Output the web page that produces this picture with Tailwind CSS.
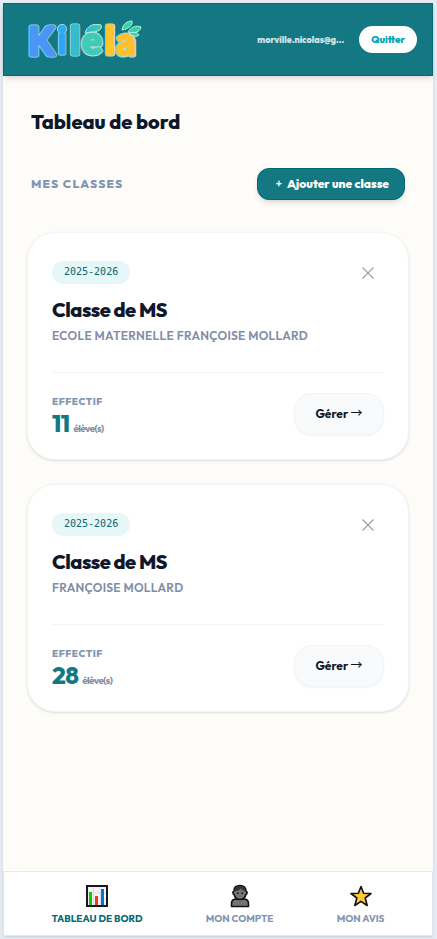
<!DOCTYPE html>
<html lang="fr">
<head>
    <meta charset="UTF-8">
    <meta name="viewport" content="width=device-width, initial-scale=1.0">
    <title>Kiléla - Tableau de bord</title>
    <script src="https://cdn.jsdelivr.net/npm/@tailwindcss/browser@4"></script>
</head>
<body class="bg-[#e5ecf4] font-['Outfit','Lato',sans-serif] text-slate-900">
    <div class="min-h-screen p-[3px] pr-1 flex flex-col">
        <div class="flex-grow flex flex-col bg-[#fdfcf8] shadow-sm">

            <!-- Header -->
            <header class="flex items-center justify-between h-[73px] pl-[22px] pr-4 bg-[#147882] border border-[#046a75] shadow-md">
                <a href="#" aria-label="Kiléla">
                    <svg width="120" height="60" viewBox="0 0 120 60" class="font-['Lato',sans-serif] font-black" text-anchor="middle" stroke-linejoin="round">
                        <defs>
                            <linearGradient id="g-teal" x1="0" y1="0" x2="1" y2="0">
                                <stop offset="0" stop-color="#2fb5cf"/>
                                <stop offset="1" stop-color="#40cdb0"/>
                            </linearGradient>
                        </defs>
                        <!-- pale outline -->
                        <g font-size="37" fill="#a5dbe0" stroke="#a5dbe0" stroke-width="5">
                            <text x="15" y="45">K</text>
                            <text x="36" y="44" stroke-width="3">i</text>
                            <circle cx="36" cy="19" r="3.500" stroke-width="3"/>
                            <text x="49" y="44">l</text>
                            <text x="66" y="44">e</text>
                            <text x="84" y="44">l</text>
                            <text x="100" y="45">a</text>
                        </g>
                        <g font-size="37" stroke-width="3.500">
                            <text x="15" y="45" fill="#4b95f7" stroke="#4b95f7">K</text>
                            <text x="36" y="44" fill="#2ca6f2" stroke="#2ca6f2" stroke-width="1.500">i</text>
                            <circle cx="36" cy="19" r="4" fill="#2cadf5"/>
                            <text x="49" y="44" fill="#36bcca" stroke="#36bcca">l</text>
                            <text x="66" y="44" fill="#40cbb4" stroke="#40cbb4" stroke-width="2.500">e</text>
                            <text x="84" y="44" fill="#fec52d" stroke="#fec52d">l</text>
                            <text x="100" y="45" fill="#fec02b" stroke="#fec02b" stroke-width="2.500">a</text>
                        </g>
                        <!-- leaves -->
                        <g stroke="#b5f0e4" stroke-width="1">
                            <path d="M59 23C61 16 67 13 75 15C77 20 71 22 66 22C63 22 61 23 59 23Z" fill="url(#g-teal)"/>
                            <path d="M96 20C97 14 101 11 106 11C107 15 103 19 96 20Z" fill="#3dd0a5"/>
                            <path d="M102 22C105 17 110 15 115 17C114 22 109 24 102 22Z" fill="#3dd0a5"/>
                            <path d="M103 23C107 22 112 22 113 25C111 27 107 27 103 23Z" fill="#3dd0a5"/>
                        </g>
                    </svg>
                </a>
                <div class="flex items-center gap-[15px]">
                    <span class="text-[9px] font-extrabold text-white/80">morville.nicolas@g...</span>
                    <button type="button" class="-mr-px h-[27px] px-3 rounded-full bg-white text-[10px] font-extrabold text-[#00a3b3]">Quitter</button>
                </div>
            </header>

            <!-- Content -->
            <main class="flex-grow px-6 pt-8">
                <h1 class="px-1 text-[20px] leading-7 font-extrabold">Tableau de bord</h1>

                <div class="flex items-center justify-between mt-8 px-1">
                    <h2 class="text-[12px] font-extrabold tracking-widest text-[#7f95b2]">MES CLASSES</h2>
                    <button type="button" class="flex items-center justify-end gap-[5px] h-8 px-[15px] min-w-[148px] rounded-xl bg-[#147882] border border-[#046a75] shadow-md text-[12px] font-extrabold text-white"><span class="font-medium">+</span> Ajouter une classe</button>
                </div>

                <div class="mt-8 space-y-6">
                    <section class="bg-white rounded-[28px] border border-slate-100 shadow-sm px-6 pt-7 pb-6">
                        <div class="flex items-center justify-between">
                            <span class="h-[23px] px-3 rounded-full bg-[#e5f7f7] font-['DejaVu_Sans_Mono',monospace] text-[10px] leading-[22px] text-[#046a75]">2025-2026</span>
                            <button type="button" aria-label="Supprimer la classe" class="p-[5px] mr-[5px]">
                                <svg width="12" height="12" viewBox="0 0 12 12" stroke="#9a9bb0" stroke-width="1.1"><path d="M.5.5l11 11M11.5.5l-11 11"/></svg>
                            </button>
                        </div>
                        <h3 class="mt-3 text-[20px] leading-7 font-extrabold tracking-tight">Classe de MS</h3>
                        <p class="mt-1 text-[12px] leading-4 font-semibold tracking-wide text-[#7f8da6]">ECOLE MATERNELLE FRANÇOISE MOLLARD</p>
                        <div class="flex items-center justify-between mt-7 pt-5 border-t border-slate-100">
                            <div>
                                <p class="text-[10px] leading-[18px] font-extrabold tracking-wider text-[#7f95b2]">EFFECTIF</p>
                                <p class="text-[24px] leading-6 font-extrabold tracking-tight text-[#147882]">11 <span class="text-[10px] leading-none font-bold text-[#7f8da6]">élève(s)</span></p>
                            </div>
                            <button type="button" class="w-[90px] h-[42px] rounded-[18px] bg-slate-50 border border-slate-100 shadow-xs text-[12px] font-bold">Gérer <span class="font-['Noto_Sans_CJK_JP',sans-serif] leading-none font-medium">→</span></button>
                        </div>
                    </section>

                    <section class="bg-white rounded-[28px] border border-slate-100 shadow-sm px-6 pt-7 pb-6">
                        <div class="flex items-center justify-between">
                            <span class="h-[23px] px-3 rounded-full bg-[#e5f7f7] font-['DejaVu_Sans_Mono',monospace] text-[10px] leading-[22px] text-[#046a75]">2025-2026</span>
                            <button type="button" aria-label="Supprimer la classe" class="p-[5px] mr-[5px]">
                                <svg width="12" height="12" viewBox="0 0 12 12" stroke="#9a9bb0" stroke-width="1.1"><path d="M.5.5l11 11M11.5.5l-11 11"/></svg>
                            </button>
                        </div>
                        <h3 class="mt-3 text-[20px] leading-7 font-extrabold tracking-tight">Classe de MS</h3>
                        <p class="mt-1 text-[12px] leading-4 font-semibold tracking-wide text-[#7f8da6]">FRANÇOISE MOLLARD</p>
                        <div class="flex items-center justify-between mt-7 pt-5 border-t border-slate-100">
                            <div>
                                <p class="text-[10px] leading-[18px] font-extrabold tracking-wider text-[#7f95b2]">EFFECTIF</p>
                                <p class="text-[24px] leading-6 font-extrabold tracking-tight text-[#147882]">28 <span class="text-[10px] leading-none font-bold text-[#7f8da6]">élève(s)</span></p>
                            </div>
                            <button type="button" class="w-[90px] h-[42px] rounded-[18px] bg-slate-50 border border-slate-100 shadow-xs text-[12px] font-bold">Gérer <span class="font-['Noto_Sans_CJK_JP',sans-serif] leading-none font-medium">→</span></button>
                        </div>
                    </section>
                </div>
            </main>

            <!-- Bottom navigation -->
            <nav class="flex items-center justify-around h-[65px] px-4 pt-px bg-white border border-slate-200 text-[10px] leading-3 font-bold text-[#7f95b2]">
                <a href="#" class="flex flex-col items-center gap-[5px] text-[#046a75]">
                    <svg width="24" height="24" viewBox="0 0 24 24">
                        <path d="M2 2h20v20H2z" fill="#f3f3f5" stroke="#17181c" stroke-width="2"/>
                        <path d="M8.500 3v18M15.500 3v18M3 9h18M3 15h18" stroke="#dddde2"/>
                        <path d="M4 8h3v13H4z" fill="#16c60c"/>
                        <path d="M10 12h3v9h-3z" fill="#f03a17"/>
                        <path d="M16 5h3v16h-3z" fill="#0078d7"/>
                    </svg>
                    TABLEAU DE BORD
                </a>
                <a href="#" class="flex flex-col items-center gap-[5px]">
                    <svg width="24" height="24" viewBox="0 0 24 24" stroke="#111" stroke-width="1.600" stroke-linejoin="round">
                        <path d="M3.500 22.500v-3c0-3 2-4.500 5-4.500h7c3 0 5 1.500 5 4.500v3z" fill="#747474"/>
                        <path d="M12 1.500c-4 0-6 2.500-6 5.500-1.500.5-1.500 3 0 3.500.8 3 3 5 6 5s5.200-2 6-5c1.500-.5 1.500-3 0-3.500 0-3-2-5.500-6-5.500z" fill="#747474"/>
                        <path d="M6.500 7C7 3 10 2 12 2s5 1 5.500 5C15 7 14 6 13 4.500 11.500 6.500 9 7 6.500 7z" fill="#333" stroke="none"/>
                        <path d="M9 8.500h1.500v1.500H9zM13.500 8.500H15v1.500h-1.500z" fill="#111" stroke="none"/>
                    </svg>
                    MON COMPTE
                </a>
                <a href="#" class="flex flex-col items-center gap-[5px]">
                    <svg width="24" height="24" viewBox="0 0 24 24" fill="#ffc83d" stroke="#111" stroke-width="1.600" stroke-linejoin="round">
                        <path d="M12 2.500l2.600 6.700 7.400.3-5.800 4.500 2 7.500-6.200-4.200-6.200 4.200 2-7.500L2 9.500l7.400-.3z"/>
                    </svg>
                    MON AVIS
                </a>
            </nav>
        </div>
    </div>
</body>
</html>
